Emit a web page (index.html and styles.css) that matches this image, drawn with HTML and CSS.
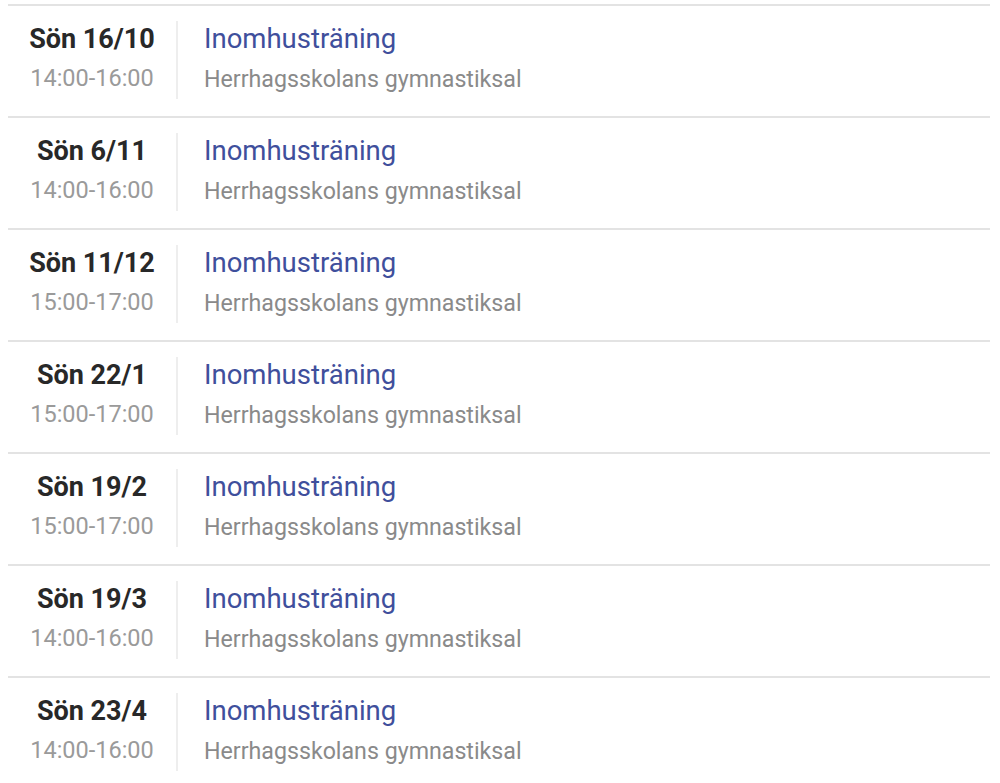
FILE: index.html
```html
<!DOCTYPE html>
<html lang="sv">
<head>
<meta charset="utf-8">
<title>Träningar</title>
<link rel="stylesheet" href="styles.css">
</head>
<body>
<ul class="events">
  <li class="event">
    <div class="when"><div class="date">Sön 16/10</div><div class="time">14:00-16:00</div></div>
    <div class="what"><a class="title" href="#">Inomhusträning</a><div class="place">Herrhagsskolans gymnastiksal</div></div>
  </li>
  <li class="event">
    <div class="when"><div class="date">Sön 6/11</div><div class="time">14:00-16:00</div></div>
    <div class="what"><a class="title" href="#">Inomhusträning</a><div class="place">Herrhagsskolans gymnastiksal</div></div>
  </li>
  <li class="event">
    <div class="when"><div class="date">Sön 11/12</div><div class="time">15:00-17:00</div></div>
    <div class="what"><a class="title" href="#">Inomhusträning</a><div class="place">Herrhagsskolans gymnastiksal</div></div>
  </li>
  <li class="event">
    <div class="when"><div class="date">Sön 22/1</div><div class="time">15:00-17:00</div></div>
    <div class="what"><a class="title" href="#">Inomhusträning</a><div class="place">Herrhagsskolans gymnastiksal</div></div>
  </li>
  <li class="event">
    <div class="when"><div class="date">Sön 19/2</div><div class="time">15:00-17:00</div></div>
    <div class="what"><a class="title" href="#">Inomhusträning</a><div class="place">Herrhagsskolans gymnastiksal</div></div>
  </li>
  <li class="event">
    <div class="when"><div class="date">Sön 19/3</div><div class="time">14:00-16:00</div></div>
    <div class="what"><a class="title" href="#">Inomhusträning</a><div class="place">Herrhagsskolans gymnastiksal</div></div>
  </li>
  <li class="event">
    <div class="when"><div class="date">Sön 23/4</div><div class="time">14:00-16:00</div></div>
    <div class="what"><a class="title" href="#">Inomhusträning</a><div class="place">Herrhagsskolans gymnastiksal</div></div>
  </li>
</ul>
</body>
</html>
```
FILE: styles.css
```css
html, body {
  margin: 0;
  padding: 0;
  background: #ffffff;
}
body {
  font-family: Roboto, "Liberation Sans", sans-serif;
  padding: 4px 10px 0 8px;
}
.events {
  list-style: none;
  margin: 0;
  padding: 0;
}
.event {
  display: flex;
  align-items: flex-start;
  border-top: 2px solid #e3e3e3;
  height: 110px;
  box-sizing: content-box;
}
.when {
  width: 168px;
  height: 78px;
  display: flex;
  flex-direction: column;
  align-items: center;
  margin-top: 15px;
  border-right: 2px solid #eeeeee;
}
.date {
  font-weight: bold;
  font-size: 27px;
  line-height: 34px;
  padding-top: 1px;
  color: #282828;
}
.time {
  font-size: 23.5px;
  line-height: 40px;
  margin-top: 2px;
  color: #9a9a9a;
}
.what {
  display: flex;
  flex-direction: column;
  padding: 16px 0 0 26px;
}
.title {
  font-size: 27.5px;
  line-height: 34px;
  color: #3f4f9c;
  text-decoration: none;
}
.place {
  font-size: 23.2px;
  line-height: 40px;
  margin-top: 3px;
  color: #8a8a8a;
}
```
